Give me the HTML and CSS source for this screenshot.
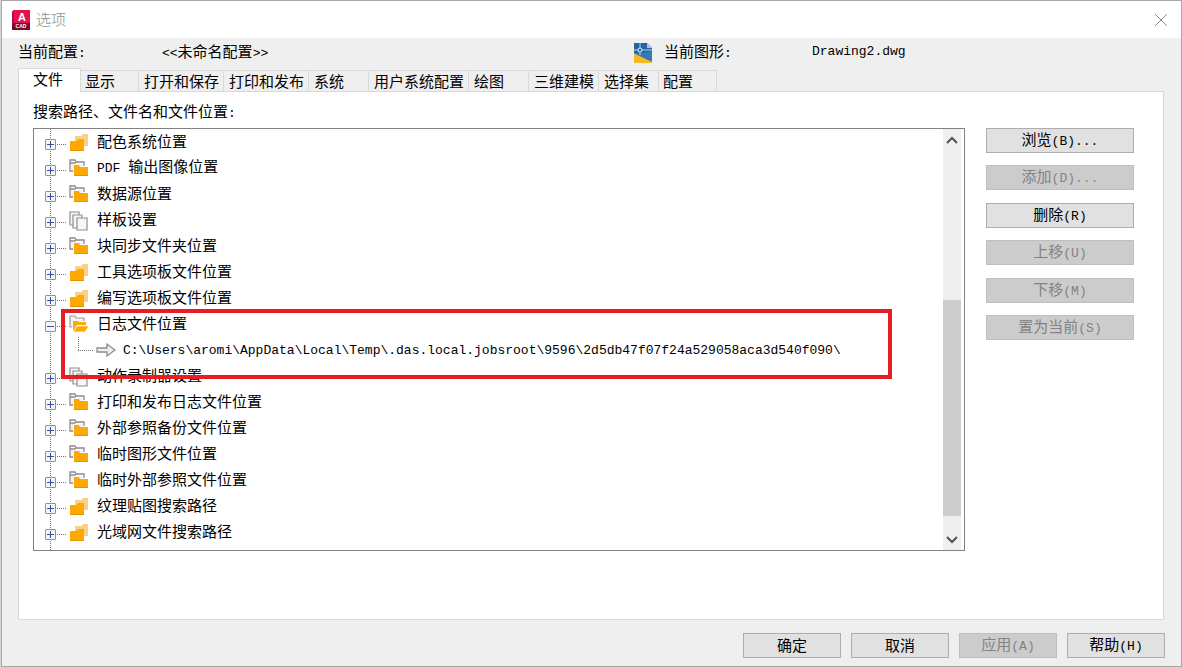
FILE: index.html
```html
<!DOCTYPE html>
<html lang="zh-CN">
<head>
<meta charset="utf-8">
<title>选项</title>
<link rel="stylesheet" href="styles.css">
</head>
<body>
<svg class="defs" aria-hidden="true">
  <symbol id="folders" viewBox="0 0 20 20">
    <path d="M6 3h6l2-2h5v12H6z" fill="#fbd085"/>
    <path d="M1 8h6l2-2h6v12H1z" fill="#ffa800"/>
    <path d="M1 17h14v1H1z" fill="#e59400"/>
  </symbol>
  <symbol id="folder-pair" viewBox="0 0 20 20">
    <path d="M2 5h12v3H5v5H2z" fill="#f2f2f2"/>
    <path d="M4 12H1V1h5l1 2h8v4M1 4h5l1-1" fill="none" stroke="#8c8c8c" stroke-width="1.3"/>
    <path d="M5 6h5l1 2h8v9H5z" fill="#ffa800"/>
    <path d="M5 16h14v1H5z" fill="#e59400"/>
  </symbol>
  <symbol id="folder-open" viewBox="0 0 20 20">
    <path d="M3 12H1V1h5l1 2h8v3" fill="#f2f2f2" stroke="#9c9c9c" stroke-width="1.2"/>
    <path d="M4 16V6h5l1 1h7v3H8l-3 5z" fill="#ffa800"/>
    <path d="M8 11h12l-4 6H4z" fill="#ffa800" stroke="#fff" stroke-width=".7"/>
  </symbol>
  <symbol id="docs" viewBox="0 0 20 20">
    <g fill="#f7f7f7" stroke="#909090" stroke-width="1.2"><path d="M1 1h9v13H1z"/><path d="M4 4h9v13H4z"/><path d="M8 7h10v12H8z"/></g>
  </symbol>
  <symbol id="arrow" viewBox="0 0 20 16">
    <path d="M1 6h10V2l8 6-8 6v-4H1z" fill="#efefef" stroke="#8c8c8c" stroke-width="1.3"/>
  </symbol>
</svg>

<main class="window">
  <header class="titlebar">
    <svg class="app-icon" viewBox="0 0 18 20" aria-hidden="true">
      <path d="M2 0h16v16l-2 1H0V2z" fill="#e6104f"/>
      <path d="M0 2l2-2v13l-2 2z" fill="#b30b3d"/>
      <path d="M0 15l2-2h16v7H0z" fill="#79082b"/>
      <text x="10" y="11" class="icon-letter">A</text>
      <text x="9" y="18" class="icon-word">CAD</text>
    </svg>
    <h1 class="title">选项</h1>
    <button class="close" type="button" aria-label="关闭">
      <svg viewBox="0 0 14 14"><path d="M1 1l12 12M13 1L1 13" fill="none" stroke="#888"/></svg>
    </button>
  </header>

  <section class="summary">
    <span>当前配置<span class="latin">:</span></span>
    <span><span class="latin">&lt;&lt;</span>未命名配置<span class="latin">&gt;&gt;</span></span>
    <svg class="dwg-icon" viewBox="0 0 18 20" aria-hidden="true">
      <path d="M0 0h13l5 5v15H0z" fill="#2864a4"/>
      <path d="M13 0l5 5h-5z" fill="#a9c4df"/>
      <path d="M0 10l18 9v1H0z" fill="#f5b921"/>
      <path d="M0 10l18 9V8l-9 2z" fill="#3579b8"/>
      <path d="M0 11l18 8v1H0z" fill="#f5b921"/>
      <path d="M0 7h18M6 0v12" stroke="#a9d4f2" fill="none"/>
      <circle cx="6" cy="7" r="2" fill="#2864a4" stroke="#d8edfa"/>
    </svg>
    <span>当前图形<span class="latin">:</span></span>
    <span class="latin">Drawing2.dwg</span>
  </section>

  <nav class="tabs" role="tablist">
    <button class="tab active" role="tab" aria-selected="true" type="button">文件</button>
    <button class="tab short" role="tab" type="button">显示</button>
    <button class="tab" role="tab" type="button">打开和保存</button>
    <button class="tab" role="tab" type="button">打印和发布</button>
    <button class="tab medium" role="tab" type="button">系统</button>
    <button class="tab" role="tab" type="button">用户系统配置</button>
    <button class="tab medium" role="tab" type="button">绘图</button>
    <button class="tab" role="tab" type="button">三维建模</button>
    <button class="tab medium" role="tab" type="button">选择集</button>
    <button class="tab short" role="tab" type="button">配置</button>
  </nav>

  <section class="panel" role="tabpanel">
    <h2 class="caption" id="paths">搜索路径、文件名和文件位置<span class="latin">:</span></h2>
    <div class="columns">
      <div class="listbox">
        <ul class="tree" role="tree" aria-labelledby="paths">
          <li class="row"><button class="toggle plus" type="button" aria-label="展开"></button><svg class="icon"><use href="#folders"/></svg><span>配色系统位置</span></li>
          <li class="row"><button class="toggle plus" type="button" aria-label="展开"></button><svg class="icon"><use href="#folder-pair"/></svg><span><span class="latin">PDF </span>输出图像位置</span></li>
          <li class="row"><button class="toggle plus" type="button" aria-label="展开"></button><svg class="icon"><use href="#folder-pair"/></svg><span>数据源位置</span></li>
          <li class="row"><button class="toggle plus" type="button" aria-label="展开"></button><svg class="icon"><use href="#docs"/></svg><span>样板设置</span></li>
          <li class="row"><button class="toggle plus" type="button" aria-label="展开"></button><svg class="icon"><use href="#folder-pair"/></svg><span>块同步文件夹位置</span></li>
          <li class="row"><button class="toggle plus" type="button" aria-label="展开"></button><svg class="icon"><use href="#folders"/></svg><span>工具选项板文件位置</span></li>
          <li class="row"><button class="toggle plus" type="button" aria-label="展开"></button><svg class="icon"><use href="#folders"/></svg><span>编写选项板文件位置</span></li>
          <li class="group">
            <div class="row"><button class="toggle" type="button" aria-label="折叠"></button><svg class="icon"><use href="#folder-open"/></svg><span>日志文件位置</span></div>
            <div class="row child"><svg class="arrow"><use href="#arrow"/></svg><span class="latin">C:\Users\aromi\AppData\Local\Temp\.das.local.jobsroot\9596\2d5db47f07f24a529058aca3d540f090\</span></div>
            <div class="highlight"></div>
          </li>
          <li class="row"><button class="toggle plus" type="button" aria-label="展开"></button><svg class="icon"><use href="#docs"/></svg><span>动作录制器设置</span></li>
          <li class="row"><button class="toggle plus" type="button" aria-label="展开"></button><svg class="icon"><use href="#folder-pair"/></svg><span>打印和发布日志文件位置</span></li>
          <li class="row"><button class="toggle plus" type="button" aria-label="展开"></button><svg class="icon"><use href="#folder-pair"/></svg><span>外部参照备份文件位置</span></li>
          <li class="row"><button class="toggle plus" type="button" aria-label="展开"></button><svg class="icon"><use href="#folder-pair"/></svg><span>临时图形文件位置</span></li>
          <li class="row"><button class="toggle plus" type="button" aria-label="展开"></button><svg class="icon"><use href="#folder-pair"/></svg><span>临时外部参照文件位置</span></li>
          <li class="row"><button class="toggle plus" type="button" aria-label="展开"></button><svg class="icon"><use href="#folders"/></svg><span>纹理贴图搜索路径</span></li>
          <li class="row"><button class="toggle plus" type="button" aria-label="展开"></button><svg class="icon"><use href="#folders"/></svg><span>光域网文件搜索路径</span></li>
        </ul>
        <div class="scrollbar">
          <button class="scroll-arrow" type="button" aria-label="向上滚动"><svg viewBox="0 0 12 8"><path d="M1 7l5-5 5 5" fill="none" stroke="#505050" stroke-width="2"/></svg></button>
          <div class="track"><div class="thumb"></div></div>
          <button class="scroll-arrow" type="button" aria-label="向下滚动"><svg viewBox="0 0 12 8"><path d="M1 1l5 5 5-5" fill="none" stroke="#505050" stroke-width="2"/></svg></button>
        </div>
      </div>
      <div class="actions">
        <button class="btn" type="button">浏览<span class="latin">(B)...</span></button>
        <button class="btn" type="button" disabled>添加<span class="latin">(D)...</span></button>
        <button class="btn" type="button">删除<span class="latin">(R)</span></button>
        <button class="btn" type="button" disabled>上移<span class="latin">(U)</span></button>
        <button class="btn" type="button" disabled>下移<span class="latin">(M)</span></button>
        <button class="btn" type="button" disabled>置为当前<span class="latin">(S)</span></button>
      </div>
    </div>
  </section>

  <footer class="footer">
    <button class="btn" type="button">确定</button>
    <button class="btn" type="button">取消</button>
    <button class="btn" type="button" disabled>应用<span class="latin">(A)</span></button>
    <button class="btn" type="button">帮助<span class="latin">(H)</span></button>
  </footer>
</main>
</body>
</html>
```

FILE: styles.css
```css
* { box-sizing: border-box; }

body {
  margin: 0;
  padding-left: 1px;
  background: #d6d6d6;
  color: #000;
  font: 15px/20px "Noto Sans CJK SC", sans-serif;
}

button {
  margin: 0;
  padding: 0;
  border: 0;
  background: none;
  color: inherit;
  font: inherit;
}

.defs { position: absolute; width: 0; height: 0; }

.latin {
  font-family: "Liberation Mono", monospace;
  font-size: 13px;
  white-space: pre;
}

.window {
  display: flex;
  flex-direction: column;
  min-height: 100vh;
  border: 1px solid #a8a8a8;
  background: #efefef;
}

.titlebar {
  display: flex;
  align-items: center;
  gap: 6px;
  height: 37px;
  padding: 0 13px 0 10px;
  background: #fff;
}

.app-icon { width: 18px; height: 20px; }
.icon-letter { font: bold 11px "Liberation Sans", sans-serif; fill: #fff; text-anchor: middle; }
.icon-word { font: bold 5px "Liberation Sans", sans-serif; fill: #fff; text-anchor: middle; }

.title { margin: 0; flex: 1; padding-bottom: 2px; color: #8c8c8c; font-size: 15px; font-weight: 300; }

.close { width: 14px; height: 14px; }
.close svg { display: block; }

.summary {
  display: grid;
  grid-template-columns: 144px 1fr 30px 148px 369px;
  align-items: center;
  height: 30px;
  padding: 0 0 2px 16px;
}

.dwg-icon { width: 18px; height: 20px; margin-top: 2px; }

.tabs {
  position: relative;
  display: flex;
  align-items: flex-end;
  height: 24px;
  margin-bottom: -1px;
  padding-left: 16px;
}

.tab {
  height: 22px;
  padding: 0 4px 2px 5px;
  border: 1px solid #d9d9d9;
  border-left: 0;
  text-align: left;
  white-space: nowrap;
}

.tab.short { width: 58px; padding-left: 4px; }
.tab.medium { width: 60px; }

.tab.active {
  width: 63px;
  height: 24px;
  padding: 0 14px 4px;
  border-left: 1px solid #d9d9d9;
  border-bottom: 0;
  background: #fff;
}

.panel {
  display: flex;
  flex: 1;
  flex-direction: column;
  margin: 0 17px 0 16px;
  padding: 9px 29px 68px 14px;
  border: 1px solid #d9d9d9;
  background: #fff;
}

.caption { margin: 0 0 4px; font-size: 15px; font-weight: 400; }

.columns { display: flex; flex: 1; gap: 21px; }

.listbox {
  display: flex;
  flex: 1;
  min-width: 0;
  padding-right: 3px;
  border: 1px solid #828282;
}

.tree {
  flex: 1;
  min-width: 0;
  margin: 0;
  padding: 0 0 0 11px;
  list-style: none;
  background: repeating-linear-gradient(#777 0 1px, transparent 1px 2px) 16px 0 / 1px 100% no-repeat;
}

.row { display: flex; align-items: center; height: 26px; white-space: nowrap; }

.row > span { padding-bottom: 2px; }

.toggle {
  position: relative;
  flex: none;
  width: 11px;
  height: 11px;
  margin-top: 4px;
  margin-right: 13px;
  border: 1px solid #919191;
  border-radius: 1px;
  background: linear-gradient(#3b4b9c, #3b4b9c) center / 7px 1px no-repeat, #f6f6f6;
}

.toggle.plus {
  background: linear-gradient(#3b4b9c, #3b4b9c) center / 7px 1px no-repeat,
    linear-gradient(#3b4b9c, #3b4b9c) center / 1px 7px no-repeat, #f6f6f6;
}

.toggle::after {
  content: "";
  position: absolute;
  top: 4px;
  left: 11px;
  width: 9px;
  height: 1px;
  background: repeating-linear-gradient(90deg, #777 0 1px, transparent 1px 2px);
}

.icon { flex: none; width: 20px; height: 20px; margin-top: 2px; margin-right: 8px; }

.group { position: relative; }

.child { padding-left: 33px; }

.row.child > span { padding: 2px 0 0; }

.child::before {
  content: "";
  width: 16px;
  height: 14px;
  margin: 0 2px 12px 0;
  background: repeating-linear-gradient(#777 0 1px, transparent 1px 2px) 0 0 / 1px 100% no-repeat,
    repeating-linear-gradient(90deg, #777 0 1px, transparent 1px 2px) 0 100% / 100% 1px no-repeat;
}

.arrow { width: 20px; height: 16px; margin-right: 7px; }

.highlight {
  position: absolute;
  z-index: 1;
  top: -2px;
  left: 16px;
  right: 51px;
  height: 70px;
  border: 4px solid #e81c24;
  pointer-events: none;
}

.scrollbar { display: flex; flex-direction: column; width: 18px; background: #efefef; }
.scroll-arrow { height: 21px; }
.scroll-arrow svg { display: block; width: 12px; height: 8px; margin: auto; }
.track { display: flex; flex: 1; flex-direction: column; justify-content: flex-end; padding-bottom: 13px; }
.thumb { height: 59%; background: #cdcdcd; }

.actions {
  display: flex;
  flex-direction: column;
  justify-content: space-between;
  width: 148px;
  height: 212px;
}

.btn {
  height: 25px;
  padding-bottom: 2px;
  border: 1px solid #adadad;
  background: #e1e1e1;
}

.btn:disabled { border-color: #bfbfbf; background: #ccc; color: #838383; }

.footer {
  display: flex;
  justify-content: flex-end;
  gap: 10px;
  padding: 13px 16px 8px;
}

.footer .btn { width: 98px; }
```
